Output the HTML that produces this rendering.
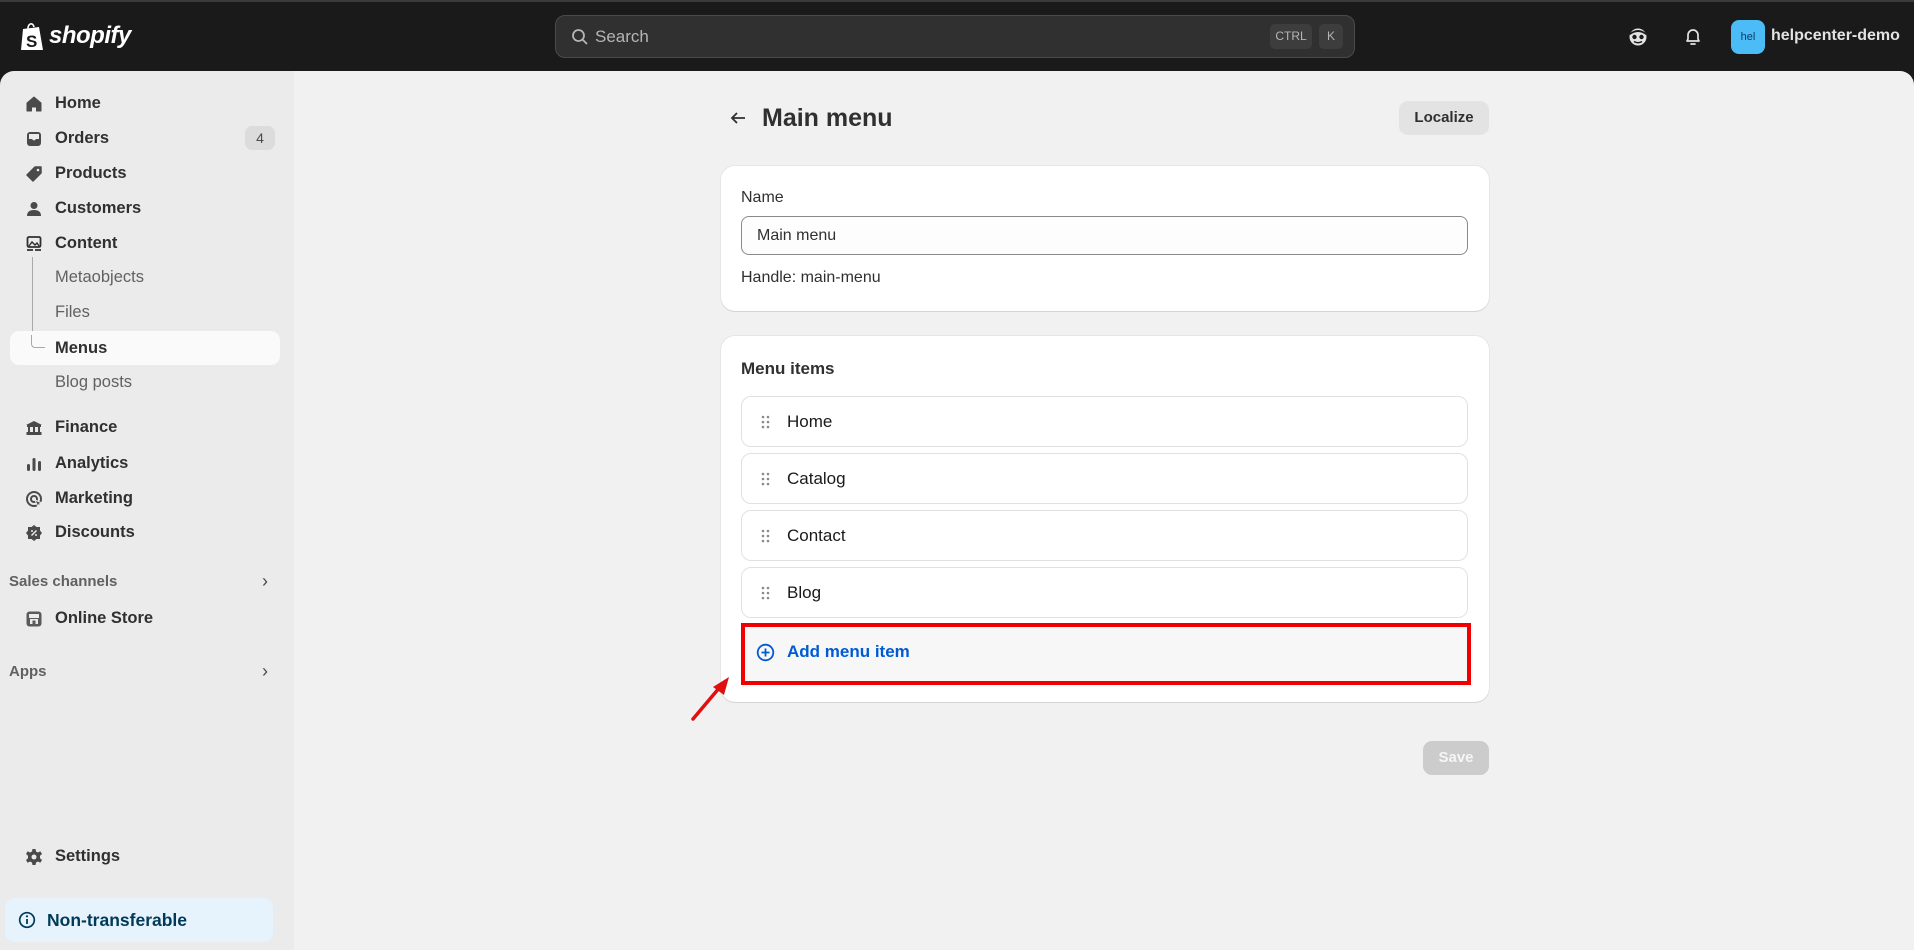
<!DOCTYPE html>
<html><head><meta charset="utf-8"><style>
*{box-sizing:border-box;margin:0;padding:0}
body{width:1914px;height:950px;overflow:hidden;background:#1a1a1a;font-family:"Liberation Sans",sans-serif;position:relative;color:#303030}
.top{position:absolute;left:0;top:0;width:1914px;height:71px;background:#1a1a1a;border-top:2px solid #3a3a3a}
.side{position:absolute;left:0;top:71px;width:294px;height:879px;background:#ebebeb;border-top-left-radius:14px}
.main{position:absolute;left:294px;top:71px;width:1620px;height:879px;background:#f1f1f1;border-top-right-radius:14px}
.ni{position:absolute;left:0;font-size:16.5px;font-weight:bold;color:#303030;height:34px;line-height:34px}
.ni .t{position:absolute;left:55px;white-space:nowrap}
.ni svg{position:absolute;left:24px;top:8px}
.sub{position:absolute;left:55px;font-size:16.5px;color:#616161;line-height:34px;height:34px;white-space:nowrap}
.card{position:absolute;left:721px;width:768px;background:#fff;border-radius:14px;box-shadow:0 1px 0 #d4d4d4,0 0 0 1px #e6e6e6}
.item{position:absolute;left:741px;width:727px;height:51px;border:1px solid #e1e1e1;border-radius:10px;background:#fff;font-size:17px;color:#1a1a1a;line-height:49px}
.item .t{position:absolute;left:45px}
.item svg{position:absolute;left:19px;top:18px}
</style></head><body>
<div class="top">
 <svg style="position:absolute;left:20px;top:19px" width="26" height="30" viewBox="0 0 26 30"><path d="M3 8 L19 6 L23 29 L1 29 Z" fill="#fff"/><path d="M8 8 C8 2 13 1 14 6" stroke="#fff" stroke-width="1.6" fill="none"/><text x="6" y="26" font-family="Liberation Sans" font-weight="bold" font-size="17" fill="#1a1a1a">S</text></svg>
 <div style="position:absolute;left:49px;top:20px;color:#fff;font-size:24px;font-weight:bold;font-style:italic;letter-spacing:-0.5px">shopify</div>
 <div style="position:absolute;left:555px;top:13px;width:800px;height:43px;background:#303030;border:1px solid #4a4a4a;border-radius:10px">
  <svg style="position:absolute;left:15px;top:12px" width="18" height="18" viewBox="0 0 18 18"><circle cx="7.5" cy="7.5" r="5.5" stroke="#b5b5b5" stroke-width="1.8" fill="none"/><path d="M11.5 11.5L16 16" stroke="#b5b5b5" stroke-width="1.8"/></svg>
  <div style="position:absolute;left:39px;top:11px;color:#b5b5b5;font-size:17px">Search</div>
  <div style="position:absolute;left:714px;top:8px;width:42px;height:25px;background:#3d3d3d;border-radius:5px;color:#b5b5b5;font-size:12px;line-height:25px;text-align:center">CTRL</div>
  <div style="position:absolute;left:763px;top:8px;width:24px;height:25px;background:#3d3d3d;border-radius:5px;color:#b5b5b5;font-size:12px;line-height:25px;text-align:center">K</div>
 </div>
 <svg style="position:absolute;left:1628px;top:25px" width="20" height="20" viewBox="0 0 20 20"><circle cx="10" cy="10" r="8.5" fill="#e3e3e3"/><path d="M2 8 Q10 2 18 8 L18 6 Q10 0 2 6Z" fill="#1a1a1a"/><circle cx="6.5" cy="10" r="2.2" fill="#1a1a1a"/><circle cx="13.5" cy="10" r="2.2" fill="#1a1a1a"/><path d="M6 14.5 Q10 17 14 14.5" stroke="#1a1a1a" stroke-width="1.5" fill="none"/></svg>
 <svg style="position:absolute;left:1683px;top:25px" width="20" height="20" viewBox="0 0 20 20"><path d="M4 14 L5 12 V8 A5 5 0 0 1 15 8 V12 L16 14 Z" stroke="#e3e3e3" stroke-width="1.7" fill="none" stroke-linejoin="round"/><path d="M8 17 H12" stroke="#e3e3e3" stroke-width="1.7" stroke-linecap="round"/></svg>
 <div style="position:absolute;left:1731px;top:18px;width:34px;height:34px;background:#4bbcf5;border-radius:8px;color:#0b3b66;font-size:11px;line-height:34px;text-align:center">hel</div>
 <div style="position:absolute;left:1771px;top:25px;color:#e3e3e3;font-size:16px;font-weight:bold">helpcenter-demo</div>
</div>

<div class="side">
 <div class="ni" style="top:15px"><svg width="20" height="20" viewBox="0 0 20 20"><path d="M3 9 L10 3 L17 9 V17 H12.5 V13 H7.5 V17 H3Z" fill="#4a4a4a" stroke="#4a4a4a" stroke-linejoin="round"/></svg><span class="t">Home</span></div>
 <div class="ni" style="top:50px"><svg width="20" height="20" viewBox="0 0 20 20"><rect x="3" y="3" width="14" height="14" rx="3" fill="#4a4a4a"/><path d="M5 5 H15 V10 H12 Q10 13 8 10 H5Z" fill="#ebebeb"/></svg><span class="t">Orders</span></div>
 <div style="position:absolute;left:245px;top:55px;width:30px;height:24px;background:#dcdcdc;border-radius:7px;font-size:14px;line-height:24px;text-align:center;color:#4a4a4a">4</div>
 <div class="ni" style="top:85px"><svg width="20" height="20" viewBox="0 0 20 20"><path d="M11 3 H17 V9 L9 17 L3 11Z" fill="#4a4a4a" stroke="#4a4a4a" stroke-linejoin="round" stroke-width="1.5"/><circle cx="14" cy="6" r="1.3" fill="#ebebeb"/></svg><span class="t">Products</span></div>
 <div class="ni" style="top:120px"><svg width="20" height="20" viewBox="0 0 20 20"><circle cx="10" cy="6.5" r="3.5" fill="#4a4a4a"/><path d="M3 17 Q3 11 10 11 Q17 11 17 17Z" fill="#4a4a4a"/></svg><span class="t">Customers</span></div>
 <div class="ni" style="top:155px"><svg width="20" height="20" viewBox="0 0 20 20"><rect x="3.5" y="3" width="13" height="10" rx="1.5" stroke="#303030" stroke-width="1.8" fill="none"/><path d="M5 12 L8 8 L11 11 L13 9 L15 12" stroke="#303030" stroke-width="1.4" fill="none"/><path d="M3 16 H9 M11 16 H17" stroke="#303030" stroke-width="1.8"/></svg><span class="t">Content</span></div>
 <div style="position:absolute;left:32px;top:186px;width:12px;height:90px;border-left:1.5px solid #a8a8a8;border-bottom:1.5px solid #a8a8a8;border-bottom-left-radius:4px"></div>
 <div class="sub" style="top:189px">Metaobjects</div>
 <div class="sub" style="top:224px">Files</div>
 <div style="position:absolute;left:10px;top:260px;width:270px;height:34px;background:#fafafa;border-radius:9px"></div>
 <div style="position:absolute;left:31px;top:264px;width:14px;height:13px;border-left:1.5px solid #a8a8a8;border-bottom:1.5px solid #a8a8a8;border-bottom-left-radius:4px"></div>
 <div class="sub" style="top:260px;color:#303030;font-weight:bold">Menus</div>
 <div class="sub" style="top:294px">Blog posts</div>
 <div class="ni" style="top:339px"><svg width="20" height="20" viewBox="0 0 20 20"><path d="M2 7 L10 3 L18 7Z M3 7 H17 V9 H3Z M4 9 H6 V14 H4Z M9 9 H11 V14 H9Z M14 9 H16 V14 H14Z M2.5 14 H17.5 V17 H2.5Z" fill="#4a4a4a"/></svg><span class="t">Finance</span></div>
 <div class="ni" style="top:375px"><svg width="20" height="20" viewBox="0 0 20 20"><rect x="3" y="10" width="3" height="7" rx="1.5" fill="#4a4a4a"/><rect x="8.5" y="4" width="3" height="13" rx="1.5" fill="#4a4a4a"/><rect x="14" y="7" width="3" height="10" rx="1.5" fill="#4a4a4a"/></svg><span class="t">Analytics</span></div>
 <div class="ni" style="top:410px"><svg width="20" height="20" viewBox="0 0 20 20"><circle cx="10" cy="10" r="7" stroke="#4a4a4a" stroke-width="2" fill="none"/><circle cx="10" cy="10" r="3" stroke="#4a4a4a" stroke-width="2" fill="none"/><path d="M11 11 L18 14 L15 15 L14 18Z" fill="#4a4a4a" stroke="#ebebeb"/></svg><span class="t">Marketing</span></div>
 <div class="ni" style="top:444px"><svg width="20" height="20" viewBox="0 0 20 20"><path d="M10 2 L12.5 4 L16 4 L16 7.5 L18 10 L16 12.5 L16 16 L12.5 16 L10 18 L7.5 16 L4 16 L4 12.5 L2 10 L4 7.5 L4 4 L7.5 4Z" fill="#4a4a4a"/><path d="M7.5 12.5 L12.5 7.5" stroke="#ebebeb" stroke-width="1.5"/><circle cx="8" cy="8" r="1" fill="#ebebeb"/><circle cx="12" cy="12" r="1" fill="#ebebeb"/></svg><span class="t">Discounts</span></div>
 <div style="position:absolute;left:9px;top:502px;font-size:15px;font-weight:bold;color:#616161">Sales channels</div>
 <div style="position:absolute;left:262px;top:500px;font-size:18px;color:#4a4a4a">&#x203A;</div>
 <div class="ni" style="top:530px"><svg width="20" height="20" viewBox="0 0 20 20"><rect x="2.5" y="2.5" width="15" height="15" rx="3" fill="#5a5a5a"/><rect x="5" y="5" width="10" height="4" fill="#ebebeb"/><rect x="6" y="10" width="8" height="5" fill="#ebebeb"/><rect x="8.5" y="11.5" width="3" height="3.5" fill="#5a5a5a"/></svg><span class="t">Online Store</span></div>
 <div style="position:absolute;left:9px;top:592px;font-size:15px;font-weight:bold;color:#616161">Apps</div>
 <div style="position:absolute;left:262px;top:590px;font-size:18px;color:#4a4a4a">&#x203A;</div>
 <div class="ni" style="top:768px"><svg width="20" height="20" viewBox="0 0 20 20"><path d="M8.5 2 H11.5 L12 4.5 L14 5.5 L16.3 4.3 L18 7 L16 8.7 V11.3 L18 13 L16.3 15.7 L14 14.5 L12 15.5 L11.5 18 H8.5 L8 15.5 L6 14.5 L3.7 15.7 L2 13 L4 11.3 V8.7 L2 7 L3.7 4.3 L6 5.5 L8 4.5Z" fill="#4a4a4a"/><circle cx="10" cy="10" r="2.5" fill="#ebebeb"/></svg><span class="t">Settings</span></div>
 <div style="position:absolute;left:5px;top:827px;width:268px;height:44px;background:#e6f2fc;border-radius:9px">
  <svg style="position:absolute;left:13px;top:13px" width="18" height="18" viewBox="0 0 18 18"><circle cx="9" cy="9" r="7.3" stroke="#003a5a" stroke-width="1.7" fill="none"/><path d="M9 8 V13" stroke="#003a5a" stroke-width="1.8"/><circle cx="9" cy="5.3" r="1.1" fill="#003a5a"/></svg>
  <div style="position:absolute;left:42px;top:12px;font-size:17.5px;font-weight:bold;color:#003a5a">Non-transferable</div>
 </div>
</div>

<div class="main"></div>

<svg style="position:absolute;left:729px;top:110px" width="18" height="16" viewBox="0 0 18 16"><path d="M16 8 H3 M8 3 L3 8 L8 13" stroke="#303030" stroke-width="1.8" fill="none"/></svg>
<div style="position:absolute;left:762px;top:104px;font-size:25px;font-weight:bold;color:#303030">Main menu</div>
<div style="position:absolute;left:1399px;top:101px;width:90px;height:34px;background:#e3e3e3;border-radius:9px;font-size:15px;line-height:34px;text-align:center;font-weight:bold;color:#303030">Localize</div>

<div class="card" style="top:166px;height:145px"></div>
<div style="position:absolute;left:741px;top:189px;font-size:16px;color:#303030">Name</div>
<div style="position:absolute;left:741px;top:216px;width:727px;height:39px;border:1px solid #8a8a8a;border-radius:8px;background:#fdfdfd"></div>
<div style="position:absolute;left:757px;top:227px;font-size:16px;color:#303030">Main menu</div>
<div style="position:absolute;left:741px;top:269px;font-size:16px;color:#303030">Handle: main-menu</div>

<div class="card" style="top:336px;height:366px"></div>
<div style="position:absolute;left:741px;top:359px;font-size:17px;font-weight:bold;color:#303030">Menu items</div>
<div class="item" style="top:396px"><svg width="10" height="14" viewBox="0 0 10 14"><g fill="#8a8a8a"><circle cx="2" cy="2" r="1.3"/><circle cx="7" cy="2" r="1.3"/><circle cx="2" cy="7" r="1.3"/><circle cx="7" cy="7" r="1.3"/><circle cx="2" cy="12" r="1.3"/><circle cx="7" cy="12" r="1.3"/></g></svg><span class="t">Home</span></div>
<div class="item" style="top:453px"><svg width="10" height="14" viewBox="0 0 10 14"><g fill="#8a8a8a"><circle cx="2" cy="2" r="1.3"/><circle cx="7" cy="2" r="1.3"/><circle cx="2" cy="7" r="1.3"/><circle cx="7" cy="7" r="1.3"/><circle cx="2" cy="12" r="1.3"/><circle cx="7" cy="12" r="1.3"/></g></svg><span class="t">Catalog</span></div>
<div class="item" style="top:510px"><svg width="10" height="14" viewBox="0 0 10 14"><g fill="#8a8a8a"><circle cx="2" cy="2" r="1.3"/><circle cx="7" cy="2" r="1.3"/><circle cx="2" cy="7" r="1.3"/><circle cx="7" cy="7" r="1.3"/><circle cx="2" cy="12" r="1.3"/><circle cx="7" cy="12" r="1.3"/></g></svg><span class="t">Contact</span></div>
<div class="item" style="top:567px"><svg width="10" height="14" viewBox="0 0 10 14"><g fill="#8a8a8a"><circle cx="2" cy="2" r="1.3"/><circle cx="7" cy="2" r="1.3"/><circle cx="2" cy="7" r="1.3"/><circle cx="7" cy="7" r="1.3"/><circle cx="2" cy="12" r="1.3"/><circle cx="7" cy="12" r="1.3"/></g></svg><span class="t">Blog</span></div>
<div style="position:absolute;left:741px;top:623px;width:730px;height:62px;border:4px solid #f00000;background:#f7f7f7"></div>
<svg style="position:absolute;left:756px;top:643px" width="19" height="19" viewBox="0 0 19 19"><circle cx="9.5" cy="9.5" r="7.8" stroke="#005bd3" stroke-width="1.8" fill="none"/><path d="M9.5 5.5 V13.5 M5.5 9.5 H13.5" stroke="#005bd3" stroke-width="1.8"/></svg>
<div style="position:absolute;left:787px;top:642px;font-size:17px;font-weight:bold;color:#005bd3">Add menu item</div>

<svg style="position:absolute;left:688px;top:670px" width="48" height="54" viewBox="0 0 48 54"><path d="M5 49 L32 17" stroke="#e01010" stroke-width="3.5" stroke-linecap="round"/><path d="M41 7 L25 17 L36 25Z" fill="#e01010"/></svg>

<div style="position:absolute;left:1423px;top:741px;width:66px;height:34px;background:#cccccc;border-radius:9px;font-size:15px;font-weight:bold;line-height:34px;text-align:center;color:#f5f5f5">Save</div>
</body></html>
